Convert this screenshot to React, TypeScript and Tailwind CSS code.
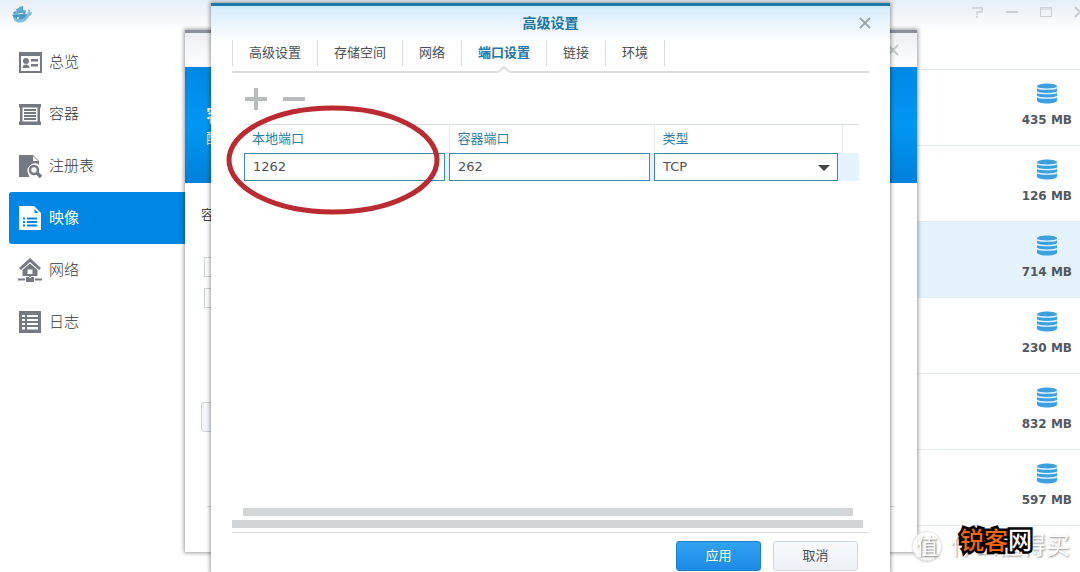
import { ReactNode } from 'react';

interface NavItem {
  label: string;
  icon: ReactNode;
  active?: boolean;
}

const navItems: NavItem[] = [
  {
    label: '总览',
    icon: (
      <svg className="size-6" viewBox="0 0 24 24" fill="currentColor" fillRule="evenodd">
        <path d="M1 2h23v21H1zM3 6v15h19V6z" />
        <circle cx="8" cy="11" r="3" />
        <path d="M4.500 18c0-2.500 1.500-3.500 3.500-3.500s3.500 1 3.500 3.500zM13 9h7v2.500h-7zM13 14h7v2.500h-7z" />
      </svg>
    ),
  },
  {
    label: '容器',
    icon: (
      <svg className="size-6" viewBox="0 0 24 24" fill="currentColor">
        <path d="M1 2h22v3.500H1zM1 19.500h22V23H1zM2 5h2.500v15H2zM19.500 5H22v15h-2.500zM6 7h12v2H6zM6 10h12v2H6zM6 13h12v2H6zM6 16h12v2H6z" />
      </svg>
    ),
  },
  {
    label: '注册表',
    icon: (
      <svg className="size-6" viewBox="0 0 24 24">
        <path d="M1 1h14l6 6v3.500a7.500 7.500 0 0 0-10.500 10l1 2.500H1z" fill="currentColor" />
        <path d="M15 2v5h5z" fill="#fff" />
        <circle cx="16" cy="16" r="4" fill="none" stroke="currentColor" strokeWidth="2.500" />
        <path d="M19 19l4 4" stroke="currentColor" strokeWidth="3.500" />
      </svg>
    ),
  },
  {
    label: '映像',
    active: true,
    icon: (
      <svg className="size-6" viewBox="0 0 24 24">
        <path d="M1 0h15l7 7v17H1z" fill="currentColor" />
        <path d="M16.500 3v4h4zM5 11.500h2v2H5zM9 11.500h10v2H9zM5 15h2v2H5zM9 15h10v2H9zM5 18.500h2v2H5zM9 18.500h10v2H9z" fill="#0086e5" />
      </svg>
    ),
  },
  {
    label: '网络',
    icon: (
      <svg className="size-6" viewBox="0 0 24 24" fill="currentColor" fillRule="evenodd">
        <path d="M12 0l11 10-2 2-9-8-9 8-2-2z" />
        <path d="M12 5.500l7.500 6.500v6h-15v-6zM9.500 11.500v4.500h5v-4.500z" />
        <path d="M11 17h2v3h-2zM8 19h8v5H8zM0 20.500h7v2H0zM17 20.500h7v2h-7z" />
      </svg>
    ),
  },
  {
    label: '日志',
    icon: (
      <svg className="size-6" viewBox="0 0 24 24" fill="currentColor" fillRule="evenodd">
        <path d="M1 1h22v22H1zM4 5v2h3V5zM9 5v2h11V5zM4 9v2h3V9zM9 9v2h11V9zM4 13v2h3v-2zM9 13v2h11v-2zM4 17v2.500h3V17zM9 17v2.500h11V17z" />
      </svg>
    ),
  },
];

const images = [
  { id: 1, size: '435 MB' },
  { id: 2, size: '126 MB' },
  { id: 3, size: '714 MB', selected: true },
  { id: 4, size: '230 MB' },
  { id: 5, size: '832 MB' },
  { id: 6, size: '597 MB' },
];

const tabs = ['高级设置', '存储空间', '网络', '端口设置', '链接', '环境'];

function DockerLogo() {
  return (
    <svg className="w-[22px] h-5" viewBox="0 0 22 20">
      <path d="M0 11c5-1 11-1 15-1 2 0 3-2 2-5 2 1 2 2 2 3l2 .5c0 2-1 3-3 3.500-2 4-5 6.500-9 6.500-5 0-7-2-7-7.500z" fill="#7dbfe2" />
      <path d="M1 11c5-1 10-1 15-.5-1 2-2 3-4 4-4 2-8 0-11-3.500z" fill="#4499c9" />
      <path d="M2 8l3-1 1 3-3 1zM5 5l3-1 1 5-3 1zM8 3l4-1v7H9zM12 6l3 .5-.5 3.500H12z" fill="#5aa9d4" />
      <circle cx="7" cy="14" r="1" fill="#fff" />
    </svg>
  );
}

function DatabaseIcon() {
  return (
    <svg className="w-5 h-[21px]" viewBox="0 0 20 21">
      <path d="M0 3.500C0-.5 20-.5 20 3.500v14c0 4-20 4-20 0z" fill="#3ba0e0" />
      <path d="M0 4.500c2 2.200 18 2.200 20 0M0 9c2 2.200 18 2.200 20 0M0 13.500c2 2.200 18 2.200 20 0" fill="none" stroke="#e6f5fe" strokeWidth="1.400" />
    </svg>
  );
}

function CloseIcon() {
  return (
    <svg className="size-3" viewBox="0 0 12 12" fill="none" stroke="currentColor" strokeWidth="2">
      <path d="M1 1l10 10M11 1L1 11" />
    </svg>
  );
}

function WindowControls() {
  return (
    <div className="flex gap-[22px] -mr-[6px] text-[#c9ced3]">
      <button aria-label="帮助">
        <svg className="size-3" viewBox="0 0 12 12" fill="none" stroke="currentColor" strokeWidth="1.500">
          <path d="M0 2h10v4H5v3M5 10v2" />
        </svg>
      </button>
      <button aria-label="最小化">
        <svg className="size-3" viewBox="0 0 12 12" fill="currentColor"><path d="M0 5h12v2H0z" /></svg>
      </button>
      <button aria-label="最大化">
        <svg className="size-3" viewBox="0 0 12 12" fill="none" stroke="currentColor">
          <path d="M.5 1.500h11v9H.5zM0 3h12" />
        </svg>
      </button>
      <button aria-label="关闭窗口"><CloseIcon /></button>
    </div>
  );
}

function Sidebar() {
  return (
    <nav className="w-60 shrink-0 pl-[9px] pt-2">
      {navItems.map((item) => (
        <a
          key={item.label}
          href="#"
          className={`flex items-center gap-[7px] h-[52px] pl-[9px] rounded-l-[3px] text-[15px] ${item.active ? 'bg-[#0086e5] text-white' : 'text-[#747982]'}`}
        >
          {item.icon}
          <span className={item.active ? 'text-white' : 'font-light text-[#33373c]'}>{item.label}</span>
        </a>
      ))}
    </nav>
  );
}

function ImageList() {
  return (
    <ul className="flex-1 mt-[41px] border-t border-[#dfe5ea]">
      {images.map((image) => (
        <li
          key={image.id}
          className={`flex flex-col items-end h-[76px] pr-2 pt-[13px] border-b border-[#e6ebef] ${image.selected ? 'bg-[#e4f3fd]' : ''}`}
        >
          <div className="flex flex-col items-center gap-2">
            <DatabaseIcon />
            <span className="text-xs leading-4 font-bold text-[#51585f]">{image.size}</span>
          </div>
        </li>
      ))}
    </ul>
  );
}

function WizardDialog() {
  return (
    <section className="absolute top-[30px] bottom-5 left-[185px] right-[163px] flex flex-col bg-white border-t-[3px] border-[#8b8f9b] shadow-[0_0_4px_1px_rgba(0,0,0,0.4)]">
      <header className="flex items-center justify-end h-[34px] pr-[18px] bg-linear-to-b from-[#eceff4] to-white text-[#c5c9ce]">
        <button aria-label="关闭向导"><CloseIcon /></button>
      </header>
      <div className="h-[116px] pl-[21px] pt-[37px] bg-linear-to-b from-[#0088e6] via-[#0097f2] to-[#0080dc] text-white">
        <h2 className="text-lg leading-6 font-bold">容器设置</h2>
        <p className="text-sm leading-5">配置</p>
      </div>
      <div className="flex-1 pl-4 pt-5 text-[13px] leading-6 text-[#444]">
        <label htmlFor="container-name">容器名称:</label>
        <div className="flex flex-col gap-[11px] mt-[30px] pl-[3px]">
          <input id="container-name" className="w-40 h-5 border border-[#c9d3dc]" />
          <input aria-label="端口" className="w-40 h-5 border border-[#c9d3dc]" />
        </div>
        <button className="w-24 h-[30px] mt-[94px] rounded-[3px] border border-[#cdd4dd] bg-[#f3f6fa]">高级设置</button>
      </div>
      <footer className="h-[46px] mx-[22px] border-t border-[#d5d8db]" />
    </section>
  );
}

function PortTable() {
  const field = 'block w-full h-7 px-2 border border-[#3f8ba6] bg-white text-[13px] text-[#4d5257] outline-none';
  return (
    <table className="w-full table-fixed border-t border-[#d9dee2] text-[13px]">
      <colgroup>
        <col className="w-1/3" />
        <col className="w-1/3" />
        <col />
        <col className="w-[17px]" />
      </colgroup>
      <thead>
        <tr className="h-7 text-left text-[#2b7fa8]">
          <th className="pl-2 font-normal border-r border-[#e6eaed]">本地端口</th>
          <th className="pl-2 font-normal border-r border-[#e6eaed]">容器端口</th>
          <th className="pl-2 font-normal border-r border-[#e6eaed]">类型</th>
          <th />
        </tr>
      </thead>
      <tbody>
        <tr className="bg-[#e4f3fd]">
          <td className="pr-1"><input aria-label="本地端口" className={field} defaultValue="1262" /></td>
          <td className="pr-1"><input aria-label="容器端口" className={field} defaultValue="262" /></td>
          <td className="pr-1">
            <div className="relative">
              <select aria-label="类型" className={`${field} appearance-none`} defaultValue="TCP">
                <option>TCP</option>
                <option>UDP</option>
              </select>
              <svg className="absolute right-2 top-3 w-3 h-[6px] pointer-events-none" viewBox="0 0 12 6" fill="#3f4448">
                <path d="M0 0h12L6 6z" />
              </svg>
            </div>
          </td>
          <td />
        </tr>
      </tbody>
    </table>
  );
}

function SettingsDialog() {
  return (
    <section className="absolute top-[3px] bottom-0 left-[211px] right-[190px] flex flex-col px-[21px] bg-linear-to-b from-[#d5ebfb] to-white to-[36px] border-t-[3px] border-[#1d79ab] shadow-[0_0_4px_1px_rgba(0,0,0,0.4)]">
      <header className="relative flex items-center justify-center h-[34px]">
        <h1 className="text-sm font-bold text-[#1b75a6]">高级设置</h1>
        <button aria-label="关闭" className="absolute -right-[2px] text-[#9fa6ac]"><CloseIcon /></button>
      </header>
      <div role="tablist" className="flex h-[33px] border-b-2 border-[#dcdddf]">
        {tabs.map((tab) => {
          const active = tab === '端口设置';
          return (
            <button
              key={tab}
              role="tab"
              aria-selected={active}
              className={`relative h-[26px] px-4 border-r border-[#d9dcdf] first:border-l text-[13px] ${active ? 'font-bold text-[#1b75a6]' : 'text-[#4a4f54]'}`}
            >
              {tab}
              {active && (
                <svg className="absolute left-1/2 -translate-x-1/2 top-[26px] w-4 h-[7px]" viewBox="0 0 16 7">
                  <path d="M1 7l7-6 7 6z" fill="#fff" stroke="#dcdddf" strokeWidth="2" />
                  <path d="M2 7h12l-1-1H3z" fill="#fff" />
                </svg>
              )}
            </button>
          );
        })}
      </div>
      <div className="relative flex-1 pl-3 pr-[10px] pt-[15px]">
        <div className="flex gap-4 pl-px mb-[14px] text-[#b9bcbf]">
          <button aria-label="添加">
            <svg className="size-[22px]" viewBox="0 0 22 22" fill="currentColor"><path d="M0 9h9V0h4v9h9v4h-9v9H9v-9H0z" /></svg>
          </button>
          <button aria-label="删除">
            <svg className="size-[22px]" viewBox="0 0 22 22" fill="currentColor"><path d="M0 9h22v4H0z" /></svg>
          </button>
        </div>
        <PortTable />
        <svg className="absolute -left-[6px] top-8 w-[214px] h-[110px] pointer-events-none" viewBox="0 0 214 110">
          <ellipse cx="107" cy="55" rx="104" ry="52" fill="none" stroke="#bb2a31" strokeWidth="5" />
        </svg>
      </div>
      <div className="flex flex-col gap-1 pb-1">
        <div className="h-2 ml-[11px] mr-4 bg-[#d3d4d6]" />
        <div className="h-2 mr-[6px] bg-[#d3d4d6]" />
      </div>
      <footer className="flex justify-end gap-3 h-10 pt-2 pr-[11px] border-t border-[#dcdddf] text-[13px]">
        <button className="w-[85px] h-[30px] rounded-[3px] border border-[#1c7fd0] bg-linear-to-b from-[#32a2f3] to-[#1a8be6] text-white">应用</button>
        <button className="w-[85px] h-[30px] rounded-[3px] border border-[#d0d7e0] bg-linear-to-b from-[#f8fafc] to-[#edf1f7] text-[#4a4f54]">取消</button>
      </footer>
    </section>
  );
}

function Watermark() {
  return (
    <div className="absolute right-[10px] bottom-2 flex items-center gap-2 h-9 text-white pointer-events-none">
      <span className="flex items-center justify-center size-[30px] rounded-full border border-[#e4e4e4] bg-white/80 text-[22px] [text-shadow:1px_1px_2px_#777] shadow-[0_1px_2px_#c8c8c8]">值</span>
      <span className="text-2xl [text-shadow:1px_1px_2px_#8c8c8c]">什么值得买</span>
      <span className="absolute left-[48px] -top-[5px] text-2xl leading-9 font-medium text-[#f2660c] [-webkit-text-stroke:5px_#000] [paint-order:stroke_fill]">
        锐客<span className="text-white">网</span>
      </span>
    </div>
  );
}

export default function App() {
  return (
    <div className="relative flex flex-col min-h-screen overflow-hidden bg-linear-to-b from-[#e6eef5] to-white to-[32px] font-['DejaVu_Sans','Noto_Sans_CJK_SC',sans-serif]">
      <header className="flex items-start justify-between h-7 pl-[11px] pt-1">
        <DockerLogo />
        <div className="pt-[2px]"><WindowControls /></div>
      </header>
      <main className="flex flex-1">
        <Sidebar />
        <ImageList />
      </main>
      <WizardDialog />
      <SettingsDialog />
      <Watermark />
    </div>
  );
}
